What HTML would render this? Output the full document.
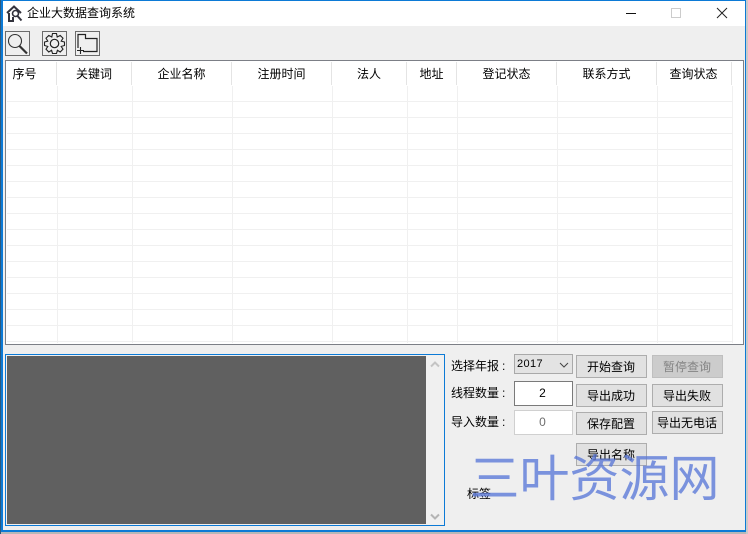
<!DOCTYPE html>
<html><head><meta charset="utf-8"><style>
html,body{margin:0;padding:0;width:748px;height:534px;overflow:hidden;background:#b8b8b8}
*{box-sizing:border-box}
body{font:12px/16px "Liberation Sans","WenQuanYi Zen Hei","Noto Sans CJK SC",sans-serif;color:#000;position:relative}
.a{position:absolute}
.t{position:absolute;white-space:nowrap}
.t i{font-style:normal;margin-left:3px}
.hs{position:absolute;top:62px;width:1px;height:23px;background:#e4e4e4}
.cs{position:absolute;top:86px;width:1px;height:257px;background:#f0f0f0}
.rs{position:absolute;left:7px;width:725px;height:1px;background:#f0f0f0}
.h{position:absolute;top:66px;height:16px;text-align:center;white-space:nowrap}
.b{position:absolute;background:#e1e1e1;border:1px solid #adadad;text-align:center;line-height:23px;white-space:nowrap}
.tb{position:absolute;top:31px;width:25px;height:25px;border:1px solid #6b6b6b;background:#efefef}
</style></head><body>
<div class="a" style="left:0;top:0;width:1px;height:534px;background:#2c5a80"></div>
<div class="a" style="left:1px;top:0;width:745px;height:532px;background:#efefef;border:1px solid #0c7ad6;border-left-width:2px;border-bottom-width:2px"></div>
<div class="a" style="left:746px;top:0;width:2px;height:534px;background:#c9c9c9"></div>
<div class="a" style="left:3px;top:1px;width:742px;height:25px;background:#fff"></div>

<svg class="a" style="left:6px;top:5px" width="17" height="17" viewBox="0 0 17 17"><path d="M1 8 8 1.5 15 8" fill="none" stroke="#33333d" stroke-width="2"/><path d="M3 8V16H7V12" fill="none" stroke="#33333d" stroke-width="2"/><circle cx="9.5" cy="8.5" r="3" fill="#fff" stroke="#33333d" stroke-width="1.6"/><path d="M11.5 11 15.5 15.5" stroke="#33333d" stroke-width="2"/></svg>
<div class="t" style="left:27px;top:5px">企业大数据查询系统</div>

<div class="a" style="left:626px;top:13px;width:10px;height:1px;background:#111"></div>
<div class="a" style="left:671px;top:8px;width:10px;height:10px;border:1px solid #ccc"></div>
<svg class="a" style="left:716px;top:7px" width="12" height="12" viewBox="0 0 12 12"><path d="M1 1 11 11M11 1 1 11" stroke="#222" stroke-width="1"/></svg>

<div class="tb" style="left:5px"><svg width="23" height="23" viewBox="0 0 23 23"><circle cx="9" cy="9" r="6.5" fill="none" stroke="#333" stroke-width="1.1"/><path d="M13.5 14 21 21.5" stroke="#333" stroke-width="2.2"/></svg></div>
<div class="tb" style="left:42px"><svg width="23" height="23" viewBox="0 0 23 23"><path d="M9.5 1.5H13.5L14.2 5 17.2 3.4 20 6.2 18.2 9.2 21.5 10V13.5L18.2 14.4 20 17.2 17.2 20 14.4 18.2 13.5 21.5H9.5L8.6 18.2 5.8 20 3 17.2 4.8 14.4 1.5 13.5V10L4.8 9.2 3 6.2 5.8 3.4 8.8 5Z" fill="none" stroke="#222" stroke-width="1.1"/><circle cx="11.5" cy="11.5" r="4.2" fill="none" stroke="#222" stroke-width="1.2"/></svg></div>
<div class="tb" style="left:75px"><svg width="23" height="23" viewBox="0 0 23 23"><path d="M2 16V2.5H9.5V6.5H21V19.5H7" fill="none" stroke="#222" stroke-width="1.2"/><path d="M1 18.5H8M4.5 15V22" stroke="#222" stroke-width="1.1"/></svg></div>

<div class="a" style="left:5px;top:60px;width:739px;height:285px;background:#fff;border:1px solid #7c7f86"></div>
<div class="h" style="left:7px;width:35px">序号</div>
<div class="h" style="left:57px;width:74px">关键词</div>
<div class="h" style="left:132px;width:99px">企业名称</div>
<div class="h" style="left:232px;width:99px">注册时间</div>
<div class="h" style="left:332px;width:74px">法人</div>
<div class="h" style="left:407px;width:49px">地址</div>
<div class="h" style="left:457px;width:99px">登记状态</div>
<div class="h" style="left:557px;width:99px">联系方式</div>
<div class="h" style="left:657px;width:73px">查询状态</div>

<div class="hs" style="left:56px"></div><div class="hs" style="left:131px"></div><div class="hs" style="left:231px"></div><div class="hs" style="left:331px"></div><div class="hs" style="left:406px"></div><div class="hs" style="left:456px"></div><div class="hs" style="left:556px"></div><div class="hs" style="left:656px"></div><div class="hs" style="left:731px"></div>
<div class="cs" style="left:57px"></div><div class="cs" style="left:132px"></div><div class="cs" style="left:232px"></div><div class="cs" style="left:332px"></div><div class="cs" style="left:407px"></div><div class="cs" style="left:457px"></div><div class="cs" style="left:557px"></div><div class="cs" style="left:657px"></div><div class="cs" style="left:732px"></div>
<div class="rs" style="top:101px"></div><div class="rs" style="top:117px"></div><div class="rs" style="top:133px"></div><div class="rs" style="top:149px"></div><div class="rs" style="top:165px"></div><div class="rs" style="top:181px"></div><div class="rs" style="top:197px"></div><div class="rs" style="top:213px"></div><div class="rs" style="top:229px"></div><div class="rs" style="top:245px"></div><div class="rs" style="top:261px"></div><div class="rs" style="top:277px"></div><div class="rs" style="top:293px"></div><div class="rs" style="top:309px"></div><div class="rs" style="top:325px"></div><div class="rs" style="top:341px"></div>

<div class="a" style="left:5px;top:354px;width:440px;height:172px;border:1px solid #0c7ad6;background:#f0f0f0"></div>
<div class="a" style="left:7px;top:356px;width:419px;height:168px;background:#606060"></div>
<svg class="a" style="left:430px;top:361px" width="10" height="7" viewBox="0 0 10 7"><path d="M1 5.5 5 1.5 9 5.5" fill="none" stroke="#c4c4c4" stroke-width="2"/></svg>
<svg class="a" style="left:430px;top:513px" width="10" height="7" viewBox="0 0 10 7"><path d="M1 1.5 5 5.5 9 1.5" fill="none" stroke="#b4b4b4" stroke-width="2"/></svg>

<div class="t" style="left:451px;top:358px">选择年报<i>:</i></div>
<div class="t" style="left:451px;top:385px">线程数量<i>:</i></div>
<div class="t" style="left:451px;top:414px">导入数量<i>:</i></div>

<div class="a" style="left:514px;top:354px;width:59px;height:20px;background:#e3e3e3;border:1px solid #a9a9a9"></div>
<div class="t" style="left:517px;top:356px;font-size:11px;letter-spacing:.4px">2017</div>
<svg class="a" style="left:559px;top:362px" width="10" height="6" viewBox="0 0 10 6"><path d="M1 1 5 5 9 1" fill="none" stroke="#444" stroke-width="1"/></svg>

<div class="a" style="left:514px;top:381px;width:59px;height:25px;background:#fff;border:1px solid #7a7a7a;text-align:center;line-height:22px;padding-right:2px">2</div>
<div class="a" style="left:514px;top:410px;width:59px;height:25px;background:#fff;border:1px solid #d0d0d0;text-align:center;line-height:22px;color:#6d6d6d;padding-right:2px">0</div>

<div class="b" style="left:576px;top:355px;width:71px;height:23px;padding-right:1px">开始查询</div>
<div class="b" style="left:652px;top:355px;width:71px;height:23px;background:#ccc;border-color:#bfbfbf;color:#838383;padding-right:1px">暂停查询</div>
<div class="b" style="left:576px;top:384px;width:71px;height:23px;padding-right:1px">导出成功</div>
<div class="b" style="left:652px;top:384px;width:71px;height:23px;padding-right:1px">导出失败</div>
<div class="b" style="left:576px;top:412px;width:71px;height:23px;padding-right:1px">保存配置</div>
<div class="b" style="left:652px;top:411px;width:71px;height:23px;padding-right:1px">导出无电话</div>
<div class="b" style="left:576px;top:443px;width:71px;height:23px;padding-right:1px">导出名称</div>
<div class="t" style="left:467px;top:486px">标签</div>

<div class="t" style="left:469.5px;top:440px;font-size:50px;line-height:70px;color:#5a78d8;opacity:.78;font-family:'Noto Sans CJK SC',sans-serif;font-weight:400">三叶资源网</div>
</body></html>
